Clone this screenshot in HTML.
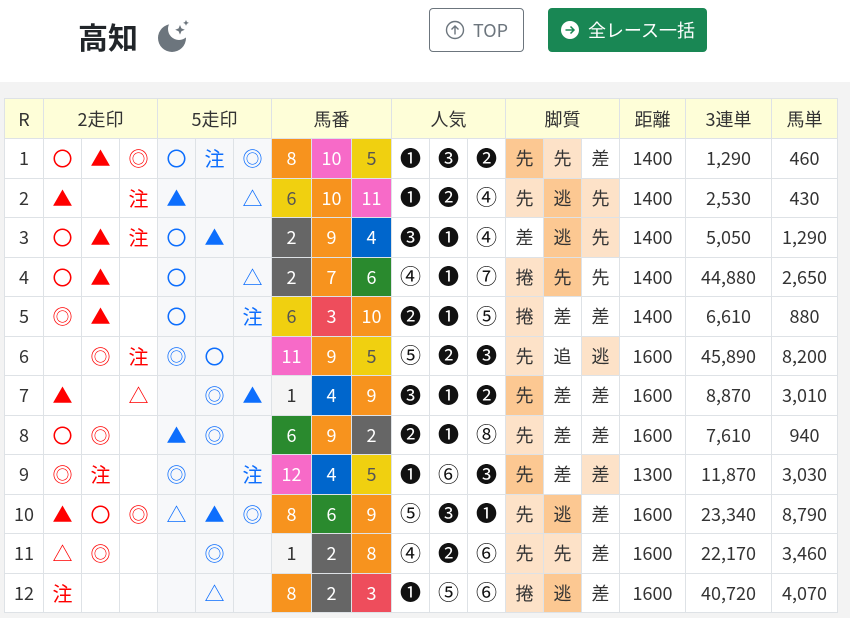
<!DOCTYPE html>
<html><head><meta charset="utf-8"><style>
body{margin:0;width:850px;height:618px;background:#fff;font-family:"Noto Sans CJK JP","Liberation Sans",sans-serif;overflow:hidden;position:relative}
.h1{position:absolute;left:78px;top:14px;font-size:30px;font-weight:bold;color:#212529;font-family:"Noto Sans CJK JP",sans-serif}
.moon{position:absolute;left:155px;top:17px}
.btn1{position:absolute;left:429px;top:8px;border:1px solid #6c757d;border-radius:4px;color:#6c757d;font-size:18px;display:flex;align-items:center;justify-content:center;gap:8px;box-sizing:border-box;width:95px;height:44px}
.btn2{position:absolute;left:548px;top:8px;width:159px;height:44px;background:#198754;border-radius:4px;color:#fff;font-size:18px;display:flex;align-items:center;justify-content:center;gap:8px}
.band{position:absolute;left:0;top:82px;width:850px;height:536px;background:#f3f3f3}
table{position:absolute;left:4px;top:98px;border-collapse:collapse;table-layout:fixed;font-size:18px;color:#333;background:#fff}
td,th{border:1px solid #dee2e6;text-align:center;padding:0;height:38.5px;font-weight:normal;line-height:1}
th{background:#fefed8;height:39px;color:#333}
.r,.b{font-size:20px}
.r{color:#f00}.b{color:#0d6efd}
.g5{background:#f7f8fa}
.o{background:#f7931e;color:#fff}.p{background:#f76ac8;color:#fff}.y{background:#f0d010;color:#555}.gy{background:#666;color:#fff}.bl{background:#0066cc;color:#fff}.gr{background:#2a8a2e;color:#fff}.rd{background:#ee4d5c;color:#fff}.w{background:#f5f5f5;color:#333}
.D{background:#fcc892}.L{background:#fde2c8}
.n{font-size:21px;color:#111}
</style></head><body>
<div class="h1">高知</div>
<svg class="moon" width="38" height="38" viewBox="0 0 38 38"><defs><mask id="m"><rect width="38" height="38" fill="#fff"/><circle cx="24" cy="12" r="11" fill="#000"/></mask></defs><circle cx="17" cy="21" r="14" fill="#6c757d" mask="url(#m)"/><path d="M25 8 l1.4 3.4 3.4 1.4 -3.4 1.4 -1.4 3.4 -1.4 -3.4 -3.4 -1.4 3.4 -1.4z" fill="#6c757d"/><path d="M31 3 l.9 2 2 .9 -2 .9 -.9 2 -.9 -2 -2 -.9 2 -.9z" fill="#6c757d"/></svg>
<div class="btn1"><svg width="20" height="20" viewBox="0 0 20 20"><circle cx="10" cy="10" r="8.5" fill="none" stroke="#6c757d" stroke-width="1.4"/><path d="M10 14.5V6M6.5 9.5L10 6l3.5 3.5" fill="none" stroke="#6c757d" stroke-width="1.4"/></svg>TOP</div>
<div class="btn2"><svg width="20" height="20" viewBox="0 0 20 20"><circle cx="10" cy="10" r="9" fill="#fff"/><path d="M5.5 10h8M10.5 6.5L14 10l-3.5 3.5" fill="none" stroke="#198754" stroke-width="1.5"/></svg>全レース一括</div>
<div class="band"></div>
<table>
<colgroup><col style="width:39px"><col style="width:38px"><col style="width:38px"><col style="width:38px"><col style="width:38px"><col style="width:38px"><col style="width:38px"><col style="width:40px"><col style="width:40px"><col style="width:40px"><col style="width:38px"><col style="width:38px"><col style="width:38px"><col style="width:38px"><col style="width:38px"><col style="width:38px"><col style="width:66px"><col style="width:86px"><col style="width:66px"></colgroup>
<tr><th>R</th><th colspan="3">2走印</th><th colspan="3">5走印</th><th colspan="3">馬番</th><th colspan="3">人気</th><th colspan="3">脚質</th><th>距離</th><th>3連単</th><th>馬単</th></tr>
<tr><td>1</td><td class="r">〇</td><td class="r">▲</td><td class="r">◎</td><td class="b g5">〇</td><td class="b g5">注</td><td class="b g5">◎</td><td class="o">8</td><td class="p">10</td><td class="y">5</td><td class="n">❶</td><td class="n">❸</td><td class="n">❷</td><td class="D">先</td><td class="L">先</td><td>差</td><td>1400</td><td>1,290</td><td>460</td></tr>
<tr><td>2</td><td class="r">▲</td><td class="r"></td><td class="r">注</td><td class="b g5">▲</td><td class="b g5"></td><td class="b g5">△</td><td class="y">6</td><td class="o">10</td><td class="p">11</td><td class="n">❶</td><td class="n">❷</td><td class="n">④</td><td class="L">先</td><td class="D">逃</td><td class="L">先</td><td>1400</td><td>2,530</td><td>430</td></tr>
<tr><td>3</td><td class="r">〇</td><td class="r">▲</td><td class="r">注</td><td class="b g5">〇</td><td class="b g5">▲</td><td class="b g5"></td><td class="gy">2</td><td class="o">9</td><td class="bl">4</td><td class="n">❸</td><td class="n">❶</td><td class="n">④</td><td>差</td><td class="D">逃</td><td class="L">先</td><td>1400</td><td>5,050</td><td>1,290</td></tr>
<tr><td>4</td><td class="r">〇</td><td class="r">▲</td><td class="r"></td><td class="b g5">〇</td><td class="b g5"></td><td class="b g5">△</td><td class="gy">2</td><td class="o">7</td><td class="gr">6</td><td class="n">④</td><td class="n">❶</td><td class="n">⑦</td><td class="L">捲</td><td class="D">先</td><td>先</td><td>1400</td><td>44,880</td><td>2,650</td></tr>
<tr><td>5</td><td class="r">◎</td><td class="r">▲</td><td class="r"></td><td class="b g5">〇</td><td class="b g5"></td><td class="b g5">注</td><td class="y">6</td><td class="rd">3</td><td class="o">10</td><td class="n">❷</td><td class="n">❶</td><td class="n">⑤</td><td class="L">捲</td><td>差</td><td>差</td><td>1400</td><td>6,610</td><td>880</td></tr>
<tr><td>6</td><td class="r"></td><td class="r">◎</td><td class="r">注</td><td class="b g5">◎</td><td class="b g5">〇</td><td class="b g5"></td><td class="p">11</td><td class="o">9</td><td class="y">5</td><td class="n">⑤</td><td class="n">❷</td><td class="n">❸</td><td class="L">先</td><td>追</td><td class="L">逃</td><td>1600</td><td>45,890</td><td>8,200</td></tr>
<tr><td>7</td><td class="r">▲</td><td class="r"></td><td class="r">△</td><td class="b g5"></td><td class="b g5">◎</td><td class="b g5">▲</td><td class="w">1</td><td class="bl">4</td><td class="o">9</td><td class="n">❸</td><td class="n">❶</td><td class="n">❷</td><td class="D">先</td><td>差</td><td>差</td><td>1600</td><td>8,870</td><td>3,010</td></tr>
<tr><td>8</td><td class="r">〇</td><td class="r">◎</td><td class="r"></td><td class="b g5">▲</td><td class="b g5">◎</td><td class="b g5"></td><td class="gr">6</td><td class="o">9</td><td class="gy">2</td><td class="n">❷</td><td class="n">❶</td><td class="n">⑧</td><td class="L">先</td><td>差</td><td>差</td><td>1600</td><td>7,610</td><td>940</td></tr>
<tr><td>9</td><td class="r">◎</td><td class="r">注</td><td class="r"></td><td class="b g5">◎</td><td class="b g5"></td><td class="b g5">注</td><td class="p">12</td><td class="bl">4</td><td class="y">5</td><td class="n">❶</td><td class="n">⑥</td><td class="n">❸</td><td class="D">先</td><td>差</td><td class="L">差</td><td>1300</td><td>11,870</td><td>3,030</td></tr>
<tr><td>10</td><td class="r">▲</td><td class="r">〇</td><td class="r">◎</td><td class="b g5">△</td><td class="b g5">▲</td><td class="b g5">◎</td><td class="o">8</td><td class="gr">6</td><td class="o">9</td><td class="n">⑤</td><td class="n">❸</td><td class="n">❶</td><td class="L">先</td><td class="D">逃</td><td>差</td><td>1600</td><td>23,340</td><td>8,790</td></tr>
<tr><td>11</td><td class="r">△</td><td class="r">◎</td><td class="r"></td><td class="b g5"></td><td class="b g5">◎</td><td class="b g5"></td><td class="w">1</td><td class="gy">2</td><td class="o">8</td><td class="n">④</td><td class="n">❷</td><td class="n">⑥</td><td class="L">先</td><td class="L">先</td><td>差</td><td>1600</td><td>22,170</td><td>3,460</td></tr>
<tr><td>12</td><td class="r">注</td><td class="r"></td><td class="r"></td><td class="b g5"></td><td class="b g5">△</td><td class="b g5"></td><td class="o">8</td><td class="gy">2</td><td class="rd">3</td><td class="n">❶</td><td class="n">⑤</td><td class="n">⑥</td><td class="L">捲</td><td class="D">逃</td><td>差</td><td>1600</td><td>40,720</td><td>4,070</td></tr>
</table>
</body></html>
